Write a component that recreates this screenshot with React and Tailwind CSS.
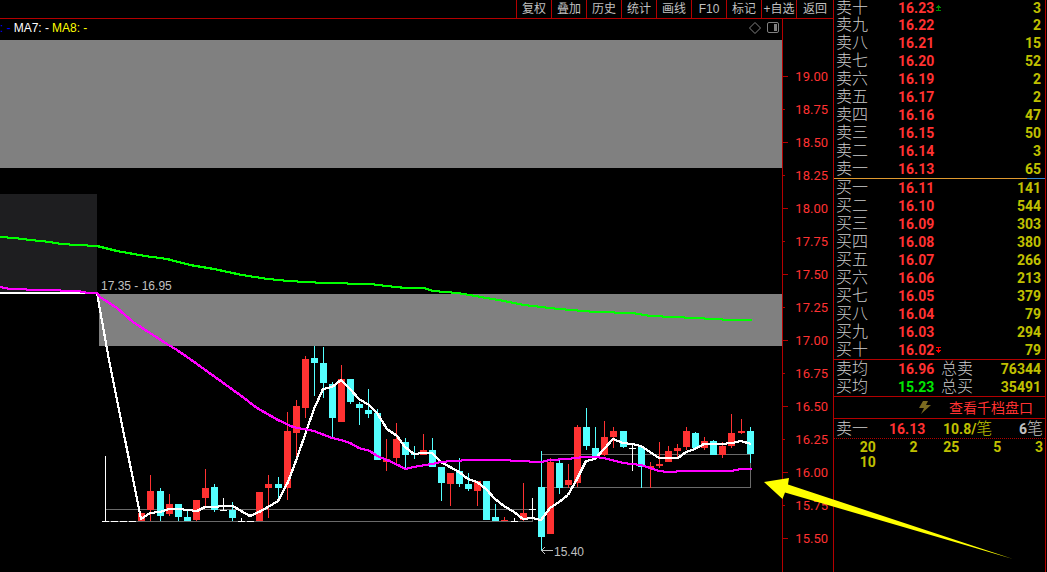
import React from "react";

const TOOLS = ["复权", "叠加", "历史", "统计", "画线", "F10", "标记", "+自选", "返回"];

const PRICES = [
  "19.00", "18.75", "18.50", "18.25", "18.00", "17.75", "17.50", "17.25",
  "17.00", "16.75", "16.50", "16.25", "16.00", "15.75", "15.50",
];

const ASKS = [
  ["卖十", "16.23", "3"], ["卖九", "16.22", "2"], ["卖八", "16.21", "15"],
  ["卖七", "16.20", "52"], ["卖六", "16.19", "2"], ["卖五", "16.17", "2"],
  ["卖四", "16.16", "47"], ["卖三", "16.15", "50"], ["卖二", "16.14", "3"],
  ["卖一", "16.13", "65"],
];

const BIDS = [
  ["买一", "16.11", "141"], ["买二", "16.10", "544"], ["买三", "16.09", "303"],
  ["买四", "16.08", "380"], ["买五", "16.07", "266"], ["买六", "16.06", "213"],
  ["买七", "16.05", "379"], ["买八", "16.04", "79"], ["买九", "16.03", "294"],
  ["买十", "16.02", "79"],
];

// [centre x, wick top, wick bottom, body top, body bottom, kind]
const CANDLES = [
  [105, 456, 522, 521, 522, "w"], [114, 521, 522, 521, 522, "w"],
  [123, 521, 522, 521, 522, "w"], [132, 521, 522, 521, 522, "w"],
  [141, 513, 521, 513, 521, "r"], [150, 475, 521, 491, 510, "r"],
  [160, 488, 521, 491, 516, "c"], [169, 494, 516, 504, 514, "r"],
  [178, 504, 521, 504, 517, "c"], [187, 511, 521, 517, 521, "c"],
  [196, 500, 521, 500, 520, "r"], [205, 469, 508, 488, 498, "r"],
  [214, 484, 512, 487, 510, "c"], [223, 498, 511, 510, 511, "w"],
  [232, 502, 521, 510, 518, "c"], [241, 518, 522, 521, 522, "w"],
  [250, 521, 522, 521, 522, "w"], [259, 492, 521, 492, 521, "r"],
  [268, 475, 518, 484, 488, "r"], [278, 477, 500, 484, 488, "c"],
  [287, 412, 500, 431, 488, "r"], [296, 400, 458, 406, 433, "r"],
  [305, 356, 418, 359, 408, "r"], [314, 346, 396, 358, 363, "c"],
  [323, 347, 398, 363, 383, "c"], [332, 382, 437, 384, 418, "c"],
  [341, 365, 422, 379, 422, "r"], [350, 379, 404, 379, 402, "c"],
  [359, 402, 425, 404, 408, "c"], [368, 389, 418, 410, 414, "c"],
  [377, 409, 460, 413, 460, "c"], [386, 439, 471, 459, 462, "r"],
  [396, 423, 463, 439, 458, "r"], [405, 438, 468, 442, 455, "c"],
  [414, 446, 459, 454, 455, "c"], [423, 434, 455, 450, 455, "r"],
  [432, 438, 467, 450, 467, "c"], [441, 467, 501, 467, 483, "c"],
  [450, 473, 506, 473, 484, "r"], [459, 458, 487, 471, 484, "c"],
  [468, 473, 491, 484, 489, "c"], [477, 481, 506, 481, 491, "r"],
  [486, 481, 520, 481, 520, "c"], [495, 504, 521, 517, 521, "c"],
  [504, 517, 521, 520, 521, "r"], [514, 518, 522, 521, 522, "w"],
  [523, 483, 521, 513, 520, "r"], [532, 498, 518, 509, 510, "w"],
  [541, 451, 551, 487, 537, "c"], [550, 458, 534, 462, 534, "r"],
  [559, 459, 494, 463, 488, "c"], [568, 464, 488, 480, 485, "r"],
  [577, 425, 487, 427, 483, "r"], [586, 408, 450, 427, 446, "c"],
  [595, 427, 458, 448, 457, "c"], [604, 421, 456, 437, 455, "r"],
  [613, 427, 448, 431, 437, "r"], [623, 431, 448, 431, 447, "c"],
  [632, 444, 471, 448, 449, "w"], [641, 446, 488, 447, 467, "c"],
  [650, 462, 488, 466, 468, "r"], [659, 442, 468, 464, 466, "r"],
  [668, 446, 462, 451, 462, "r"], [677, 444, 457, 448, 451, "r"],
  [686, 427, 450, 431, 447, "r"], [695, 432, 449, 433, 448, "c"],
  [704, 437, 450, 441, 448, "r"], [713, 440, 455, 441, 455, "c"],
  [722, 442, 458, 446, 455, "r"], [731, 414, 448, 433, 446, "r"],
  [741, 419, 434, 431, 433, "r"], [750, 427, 463, 431, 454, "c"],
];

const FILL = { r: "#ff3232", c: "#54ffff", w: "#ffffff" };

const WHITE_MA =
  "0,293 97,293 109,360 141,519 150,513 160,512 169,509 180,509 187,510 197,511 205,507 214,507 223,506 233,506 241,511 250,516 259,512 268,507 278,501 288,482 297,458 306,432 314,409 323,389 332,387 341,380 350,389 359,399 369,405 377,413 387,429 397,436 405,447 414,454 423,453 432,453 441,462 450,467 459,472 468,479 477,482 486,489 495,499 504,506 514,512 523,519 532,518 541,520 550,508 559,502 568,495 577,479 586,461 595,459 604,449 613,439 623,443 632,444 641,446 650,452 659,458 678,458 686,452 695,449 704,444 722,444 732,443 741,441 751,444";
const MAGENTA_MA =
  "0,287 10,289 42,290 78,291 88,293 97,293 100,297 117,308 133,322 167,344 177,350 190,359 240,395 257,408 278,420 293,427 314,431 332,438 341,440 350,443 359,448 370,451 377,456 387,460 400,466 405,469 414,467 432,464 441,462 453,461 470,460 503,460 517,461 541,462 550,460 568,459 583,457 595,457 604,458 623,463 641,465 650,468 659,471 668,472 686,471 731,471 741,469 751,469";
const GREEN_MA =
  "0,237 15,238 30,240 50,242 61,244 78,245 97,246 117,251 145,256 167,259 190,265 214,269 242,275 268,279 288,281 324,283 370,284 386,286 406,288 424,288 433,291 458,293 481,297 504,301 524,305 559,309 596,312 632,313 651,316 695,318 731,320 751,320";

// Four one-pixel strokes give the line the even weight of a square pen.
const PEN = ["-0.5 -0.5", "0.5 -0.5", "-0.5 0.5", "0.5 0.5"];

function PenLine({ points, color }) {
  return (
    <g fill="none" stroke={color} shapeRendering="crispEdges">
      {PEN.map((o) => (
        <polyline key={o} points={points} transform={`translate(${o})`} />
      ))}
    </g>
  );
}

function Toolbar() {
  return (
    <nav className="flex h-[19px] justify-end border-b border-[#b40000]">
      {TOOLS.map((t) => (
        <button
          key={t}
          type="button"
          className="w-[35px] border-l border-[#b40000] text-center text-xs leading-4 whitespace-nowrap text-[#c0c0c0] last:w-[37px]"
        >
          {t}
        </button>
      ))}
    </nav>
  );
}

function Legend() {
  return (
    <div className="flex h-[21px] items-center justify-between pr-[3px] pb-[3px] text-xs leading-4">
      <div className="flex gap-[3px]">
        <span className="text-[#0000ff]">: -</span>
        <span className="text-white">MA7: -</span>
        <span className="text-[#ffff00]">MA8: -</span>
      </div>
      <div className="flex items-center gap-[6px]">
        <button type="button" aria-label="标记点">
          <svg width="12" height="12" viewBox="0 0 12 12" className="block">
            <path d="M6 0.5 L11.5 6 L6 11.5 L0.5 6 Z" fill="none" stroke="#808080" />
          </svg>
        </button>
        <button type="button" aria-label="侧栏">
          <svg width="12" height="12" viewBox="0 0 12 12" className="block">
            <rect x="0.5" y="0.5" width="11" height="10" rx="1.5" fill="none" stroke="#808080" />
            <rect x="7" y="2" width="3" height="7" fill="#808080" />
          </svg>
        </button>
      </div>
    </div>
  );
}

function Chart() {
  return (
    <svg viewBox="0 40 782 532" className="block h-auto w-full" role="img" aria-label="K线图">
      <rect x="0" y="40" width="782" height="128" fill="#808080" />
      <rect x="0" y="194" width="97" height="99" fill="#1e1e20" />
      <rect x="99" y="294" width="683" height="52" fill="#808080" />
      <g fill="none" stroke="#6a6a6a" shapeRendering="crispEdges">
        <rect x="105.5" y="509.5" width="427" height="12" />
        <rect x="541.5" y="454.5" width="209" height="33" />
      </g>
      <g shapeRendering="crispEdges">
        {CANDLES.map(([x, hi, lo, top, bottom, k]) => (
          <g key={x} fill={FILL[k]}>
            <rect x={x} y={hi} width="1" height={lo - hi} />
            <rect x={x - 3} y={top} width="7" height={bottom - top} />
          </g>
        ))}
      </g>
      <PenLine points={WHITE_MA} color="#ffffff" />
      <PenLine points={MAGENTA_MA} color="#ff00ff" />
      <PenLine points={GREEN_MA} color="#00ff00" />
      <path d="M553 550.5 H541.5 M545 547 L541.5 550.5 L545 554" fill="none" stroke="#c0c0c0" />
      <g fill="#c0c0c0" fontSize="12">
        <text x="101" y="290">17.35 - 16.95</text>
        <text x="554" y="556">15.40</text>
      </g>
    </svg>
  );
}

function PriceAxis() {
  return (
    <ul className="w-[51px] border-l border-[#b40000] pt-[41px]">
      {PRICES.map((p, i) => (
        <li
          key={p}
          className="flex h-[33px] items-center justify-between pr-[5px] font-[Roboto,sans-serif] text-[13px] leading-4 text-[#ff3232]"
        >
          <span className={i % 2 ? "h-px w-[2px] bg-[#b40000]" : "h-px w-[5px] bg-[#b40000]"} />
          {p}
        </li>
      ))}
    </ul>
  );
}

function Mark({ up }) {
  return (
    <svg width="5" height="6" viewBox="0 0 5 6" className="ml-[2px]" shapeRendering="crispEdges">
      {up ? (
        <path d="M2 0h1v1h1v1h1v1h-2v2h2v1h-5v-1h2v-2h-2v-1h1v-1h1z" fill="#008c00" />
      ) : (
        <path d="M0 0h5v1h-2v2h2v1h-1v1h-1v1h-1v-1h-1v-1h-1v-1h2v-2h-2z" fill="#ff0000" />
      )}
    </svg>
  );
}

const LABEL = "p-0 text-left text-base font-light text-[#cccccc]";
const DIGITS = "p-0 font-[Roboto,sans-serif] text-sm font-bold";

function Level({ row, mark }) {
  // The first ask sits against the window's top edge in a slightly shorter row.
  return (
    <tr className={mark === "up" ? "h-4 leading-4" : "h-[18px] leading-[18px]"}>
      <th scope="row" className={`w-[64px] pl-[2px]! leading-[inherit] ${LABEL}`}>
        {row[0]}
      </th>
      <td className={`leading-[inherit] text-[#ff3232] ${DIGITS}`}>
        <span className="flex items-center">
          {row[1]}
          {mark && <Mark up={mark === "up"} />}
        </span>
      </td>
      <td className={`pr-1! text-right leading-[inherit] text-[#c0c000] ${DIGITS}`}>{row[2]}</td>
    </tr>
  );
}

function Average({ label, price, tone, total, value }) {
  return (
    <tr className="h-[18px] leading-[18px]">
      <th scope="row" className={`w-[64px] pl-[2px]! leading-[inherit] ${LABEL}`}>
        {label}
      </th>
      <td className={`w-[43px] leading-[inherit] ${tone} ${DIGITS}`}>{price}</td>
      <th scope="row" className={`leading-[inherit] ${LABEL}`}>
        {total}
      </th>
      <td className={`pr-1! text-right leading-[inherit] text-[#c0c000] ${DIGITS}`}>{value}</td>
    </tr>
  );
}

function OrderBook() {
  return (
    <aside className="mr-px w-[213px] shrink-0 border-x border-[#b40000]">
      <table className="w-full border-collapse">
        <tbody>
          {ASKS.map((r, i) => (
            <Level key={r[0]} row={r} mark={i === 0 ? "up" : null} />
          ))}
        </tbody>
      </table>
      <div className="flex h-px">
        <span className="flex-1 bg-[#e09a30]" />
        <span className="w-[18px] bg-[#3a86d0]" />
      </div>
      <table className="w-full border-collapse">
        <tbody>
          {BIDS.map((r, i) => (
            <Level key={r[0]} row={r} mark={i === 9 ? "down" : null} />
          ))}
        </tbody>
      </table>
      <div className="border-t border-[#b40000]">
        <table className="w-full border-collapse">
          <tbody>
            <Average label="卖均" price="16.96" tone="text-[#ff3232]" total="总卖" value="76344" />
            <Average label="买均" price="15.23" tone="text-[#00e600]" total="总买" value="35491" />
          </tbody>
        </table>
      </div>
      <div className="flex h-[22px] items-center justify-end gap-[18px] border-t border-[#b40000] pr-3">
        <svg width="12" height="13" viewBox="0 0 12 13">
          <path d="M4 0 H9 L7 4 H12 L2 13 L5 7 H0 Z" fill="#7a6a20" />
        </svg>
        <a href="#depth" className="text-sm leading-5 text-[#ff3232]">
          查看千档盘口
        </a>
      </div>
      <div className="flex h-5 items-center border-t border-[#b40000] pr-[2px] pl-[2px] font-[Roboto,'Noto_Sans_CJK_SC',sans-serif] text-sm leading-[18px] font-bold">
        <span className="w-[53px] text-base leading-[18px] font-light text-[#cccccc]">卖一</span>
        <span className="w-[54px] text-[#ff3232]">16.13</span>
        <span className="flex items-center text-[#c0c000]">
          10.8/<span className="text-base leading-[18px] font-light">笔</span>
        </span>
        <span className="ml-auto flex items-center text-[#c0c0c0]">
          6<span className="text-base leading-[18px] font-light">笔</span>
        </span>
      </div>
      <div className="border-t border-dotted border-[#b40000]" />
      <div className="grid grid-cols-5 pt-px pr-[2px] text-right font-[Roboto,sans-serif] text-sm leading-[15px] font-bold text-[#c0c000]">
        {["20", "2", "25", "5", "3", "10"].map((n) => (
          <span key={n}>{n}</span>
        ))}
      </div>
    </aside>
  );
}

export default function App() {
  return (
    <main className="relative flex min-h-screen overflow-hidden bg-black font-['Liberation_Sans','Noto_Sans_CJK_SC',sans-serif]">
      <div className="flex min-w-0 flex-1 flex-col">
        <Toolbar />
        <div className="flex flex-1">
          <div className="min-w-0 flex-1">
            <Legend />
            <Chart />
          </div>
          <PriceAxis />
        </div>
      </div>
      <OrderBook />
      <svg
        width="251"
        height="82"
        viewBox="0 0 251 82"
        className="pointer-events-none absolute top-[478px] right-[33px]"
        aria-hidden="true"
      >
        <path d="M1 4 L26 0 L25 6.5 L250 81 L22 14.5 L19.5 21 Z" fill="#ffff00" />
      </svg>
    </main>
  );
}
